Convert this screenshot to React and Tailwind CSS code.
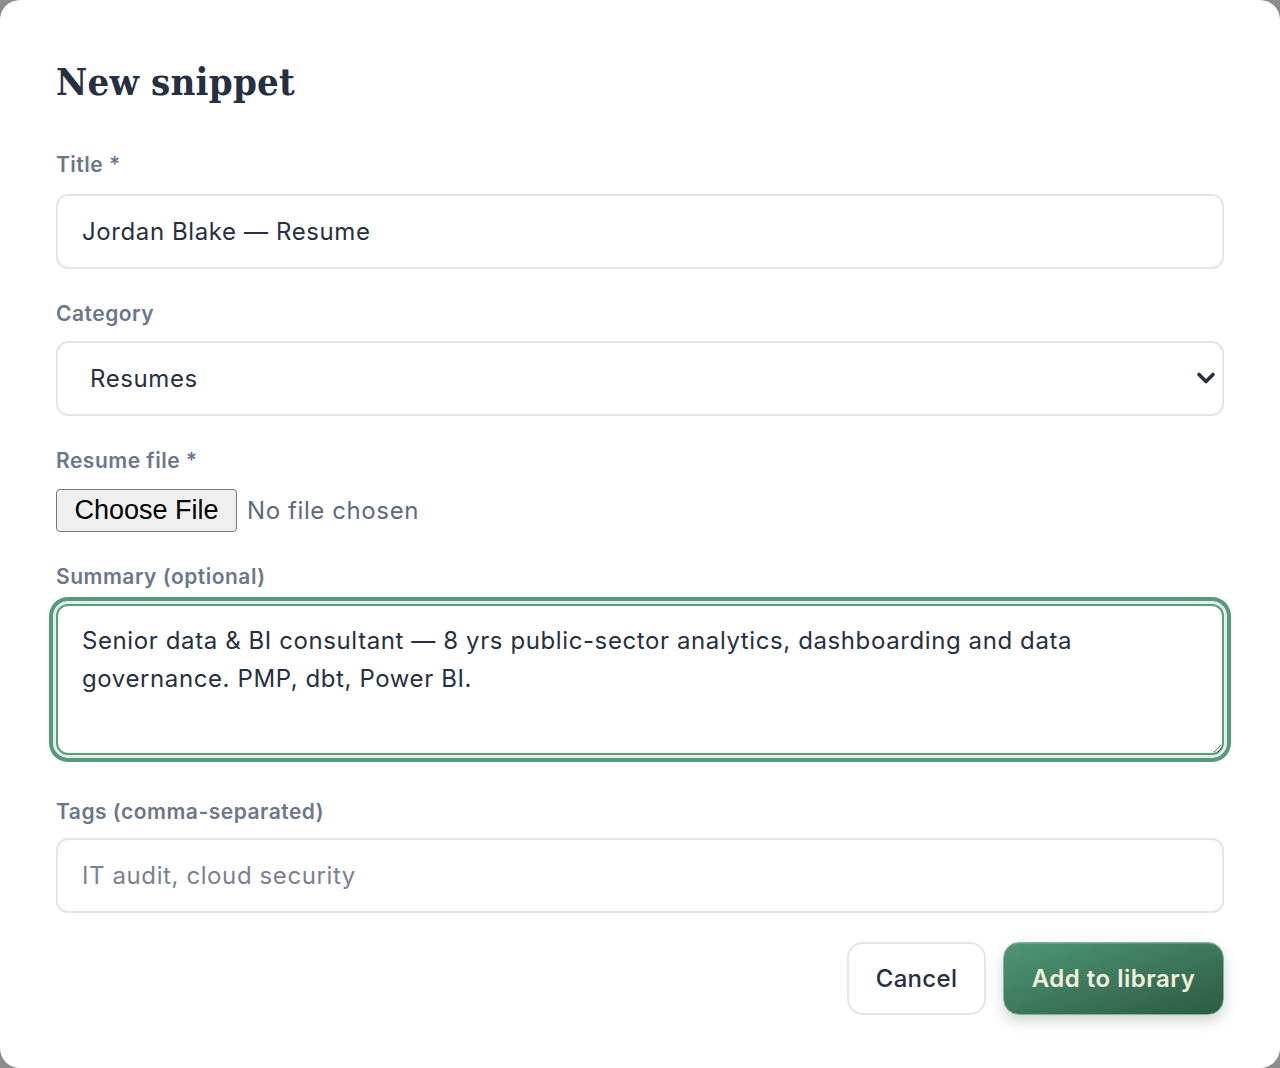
import React from "react";

const sans = { fontFamily: 'Inter, "Noto Sans", sans-serif' };

function Label({ children, className = "" }) {
  return (
    <div className={"text-[21px] leading-[28px] font-semibold tracking-[0.5px] text-[#6b778b] " + className}>{children}</div>
  );
}

export default function App() {
  return (
    <div className="min-h-screen bg-[#8c8c8c]" style={sans}>
      <div className="h-[1068px] w-[1280px] rounded-[20px] bg-white px-[56px] pt-[58px]">
        <h1
          className="text-[38px] leading-[48px] font-bold text-[#263041] tracking-[0.2px]"
          style={{ fontFamily: '"DejaVu Serif Condensed", "DejaVu Serif", serif' }}
        >
          New snippet
        </h1>

        <Label className="mt-[45px]">Title *</Label>
        <input
          className="mt-[15px] block h-[75px] w-[1168px] rounded-[12px] border-2 border-[#e2e5ea] bg-white px-[24px] text-[24px] tracking-[0.6px] text-[#263041] outline-none"
          defaultValue="Jordan Blake — Resume"
        />

        <Label className="mt-[31px]">Category</Label>
        <div className="relative mt-[13px] w-[1168px]">
          <select
            className="block h-[75px] w-full appearance-none rounded-[12px] border-2 border-[#e2e5ea] bg-white pl-[32px] text-[24px] tracking-[0.6px] text-[#263041] outline-none"
            defaultValue="Resumes"
          >
            <option>Resumes</option>
          </select>
          <svg
            className="pointer-events-none absolute right-[8px] top-[30px]"
            width="20"
            height="14"
            viewBox="0 0 20 14"
          >
            <path d="M3 3.5 L10 10.5 L17 3.5" fill="none" stroke="#263041" strokeWidth="3.6" strokeLinecap="round" strokeLinejoin="round" />
          </svg>
        </div>

        <Label className="mt-[31px]">Resume file *</Label>
        <div className="mt-[14px] flex items-center h-[43px]">
          <span
            className="flex h-[43px] w-[181px] items-center justify-center rounded-[4px] border border-[#767676] bg-[#efefef] text-[27px] text-black"
            style={{ fontFamily: '"Liberation Sans", Arial, sans-serif' }}
          >
            Choose File
          </span>
          <span className="ml-[10px] text-[24px] tracking-[0.6px] text-[#5d6a7e]">No file chosen</span>
        </div>

        <Label className="mt-[31px]">Summary (optional)</Label>
        <textarea
          className="mt-[13px] block h-[151px] w-[1168px] resize-y rounded-[12px] border-2 border-[#5a9e7e] bg-white px-[24px] pt-[16px] text-[24px] leading-[38px] tracking-[0.6px] text-[#263041] outline-none shadow-[0_0_0_3px_#e3eee8,0_0_0_7px_#559a7b]"
          defaultValue="Senior data & BI consultant — 8 yrs public-sector analytics, dashboarding and data governance. PMP, dbt, Power BI."
        />

        <Label className="mt-[43px]">Tags (comma-separated)</Label>
        <input
          className="mt-[12px] block h-[75px] w-[1168px] rounded-[12px] border-2 border-[#e2e5ea] bg-white px-[24px] text-[24px] tracking-[0.6px] text-[#263041] placeholder:text-[#7a8190] outline-none"
          placeholder="IT audit, cloud security"
        />

        <div className="mt-[29px] flex w-[1168px] justify-end gap-[17px]">
          <button className="h-[73px] w-[139px] rounded-[16px] border-2 border-[#e2e5ea] bg-white text-[24px] font-medium tracking-[0.3px] text-[#263041]">
            Cancel
          </button>
          <button className="h-[73px] w-[221px] rounded-[16px] border border-[#7db49a] bg-gradient-to-br from-[#4f9777] to-[#2c5b44] text-[24px] font-semibold tracking-[0.5px] text-[#f2efdc] shadow-[0_6px_14px_rgba(30,60,45,0.22),inset_0_1px_0_rgba(255,255,255,0.15)]">
            Add to library
          </button>
        </div>
      </div>
    </div>
  );
}
